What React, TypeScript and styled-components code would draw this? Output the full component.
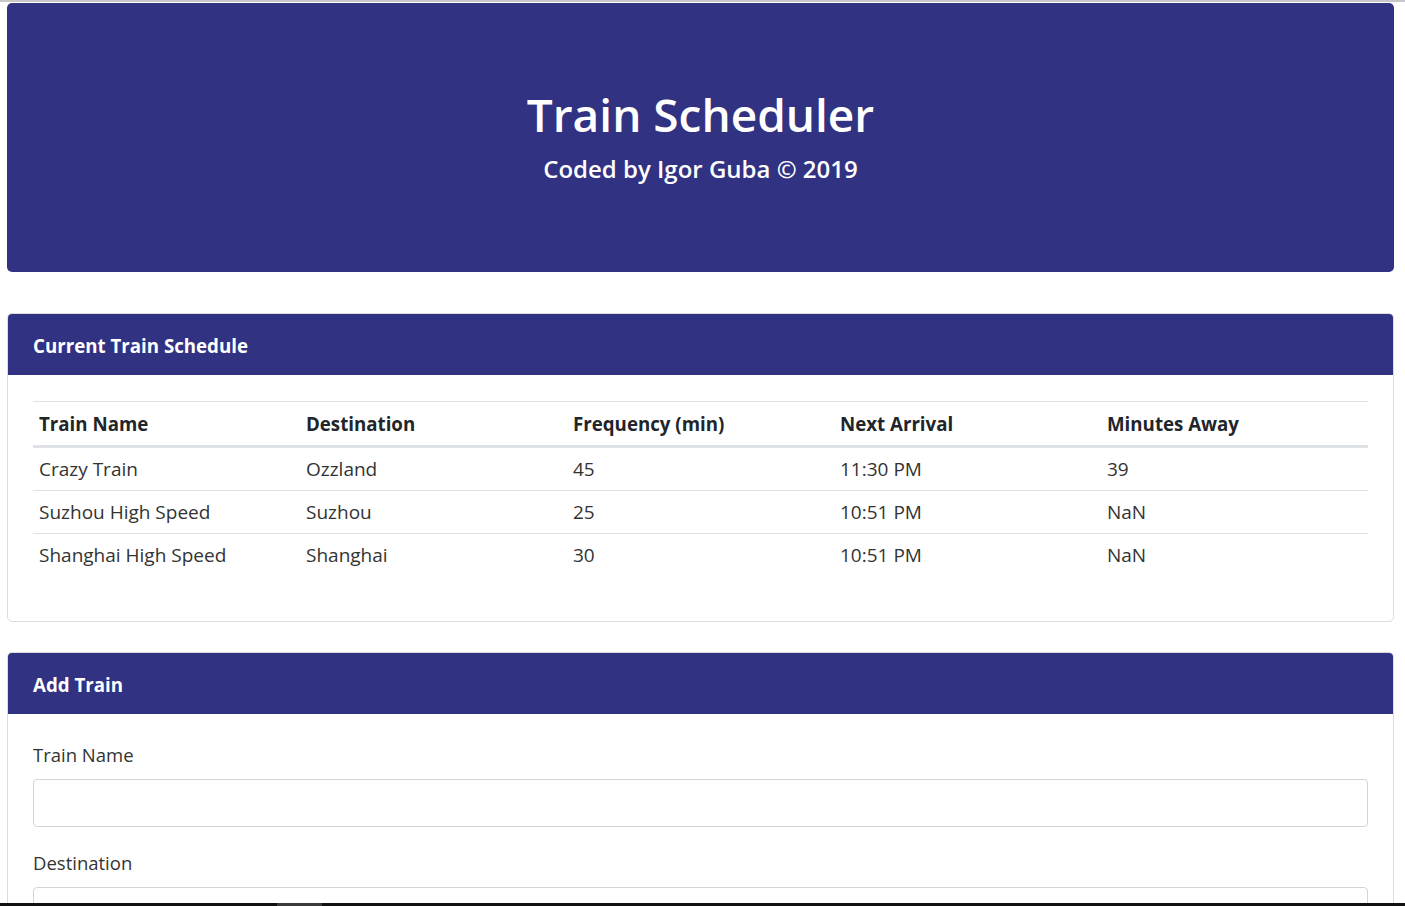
import React from "react";
import styled, { createGlobalStyle } from "styled-components";

const Global = createGlobalStyle`
  html, body { margin: 0; padding: 0; background: #fff; }
  body { font-family: "Open Sans", "Noto Sans", sans-serif; color: #212529; }
  * { box-sizing: border-box; }
`;

const NAVY = "#323282";

const TopLine = styled.div`
  height: 3px;
  border-top: 2px solid #c8c8c8;
`;

const Page = styled.div`
  margin: 0 11px 0 7px;
`;

const Jumbo = styled.header`
  background: ${NAVY};
  border-radius: 5px;
  height: 269px;
  color: #fff;
  text-align: center;
  padding-top: 80px;
`;

const Title = styled.h1`
  margin: 0;
  font-size: 46px;
  font-weight: 600;
  line-height: 62px;
`;

const Subtitle = styled.h3`
  margin: 8px 0 0;
  font-size: 24px;
  font-weight: 600;
  line-height: 32px;
`;

const Card = styled.section<{ $top: number }>`
  margin-top: ${(p) => p.$top}px;
  border: 1px solid #dcdcdc;
  border-radius: 5px;
  overflow: hidden;
`;

const CardHeader = styled.div`
  background: ${NAVY};
  color: #fff;
  height: 61px;
  display: flex;
  align-items: center;
  padding: 2px 25px 0;
  font-size: 18.7px;
  font-weight: 700;
`;

const CardBody = styled.div<{ $pad: string }>`
  padding: ${(p) => p.$pad};
`;

const Table = styled.table`
  width: 100%;
  border-collapse: collapse;
  table-layout: fixed;
  font-size: 19px;
`;

const Th = styled.th`
  text-align: left;
  font-weight: 700;
  font-size: 18.7px;
  color: #212529;
  padding: 0 6px;
  height: 45px;
  border-top: 1px solid #dee2e6;
  border-bottom: 3px solid #dee2e6;
`;

const Td = styled.td<{ $last?: boolean; $first?: boolean }>`
  padding: 0 6px;
  height: ${(p) => (p.$first ? 44 : 43)}px;
  color: #333;
  border-bottom: ${(p) => (p.$last ? "none" : "1px solid #dee2e6")};
`;

const Label = styled.label`
  display: block;
  font-size: 18.5px;
  color: #333;
  line-height: 24px;
  margin-bottom: 12px;
`;

const Input = styled.input`
  display: block;
  width: 100%;
  height: 48px;
  border: 1px solid #d4d4d4;
  border-radius: 4px;
  margin-bottom: 24px;
  font-size: 18px;
  padding: 0 12px;
`;

const BottomBar = styled.div`
  position: fixed;
  left: 0;
  right: 0;
  bottom: 0;
  height: 3px;
  background: #111;
`;

const BarThumb = styled.div`
  margin-left: 277px;
  width: 45px;
  height: 3px;
  background: #3a3a3a;
`;

const rows = [
  ["Crazy Train", "Ozzland", "45", "11:30 PM", "39"],
  ["Suzhou High Speed", "Suzhou", "25", "10:51 PM", "NaN"],
  ["Shanghai High Speed", "Shanghai", "30", "10:51 PM", "NaN"],
];

export default function App() {
  return (
    <>
      <Global />
      <TopLine />
      <Page>
        <Jumbo>
          <Title>Train Scheduler</Title>
          <Subtitle>Coded by Igor Guba © 2019</Subtitle>
        </Jumbo>
        <Card $top={41}>
          <CardHeader>Current Train Schedule</CardHeader>
          <CardBody $pad="26px 25px 44px">
            <Table>
              <thead>
                <tr>
                  <Th>Train Name</Th>
                  <Th>Destination</Th>
                  <Th>Frequency (min)</Th>
                  <Th>Next Arrival</Th>
                  <Th>Minutes Away</Th>
                </tr>
              </thead>
              <tbody>
                {rows.map((r, i) => (
                  <tr key={i}>
                    {r.map((c, j) => (
                      <Td key={j} $first={i === 0} $last={i === rows.length - 1}>
                        {c}
                      </Td>
                    ))}
                  </tr>
                ))}
              </tbody>
            </Table>
          </CardBody>
        </Card>
        <Card $top={30}>
          <CardHeader>Add Train</CardHeader>
          <CardBody $pad="29px 25px 25px">
            <Label>Train Name</Label>
            <Input />
            <Label>Destination</Label>
            <Input />
          </CardBody>
        </Card>
      </Page>
      <BottomBar>
        <BarThumb />
      </BottomBar>
    </>
  );
}
